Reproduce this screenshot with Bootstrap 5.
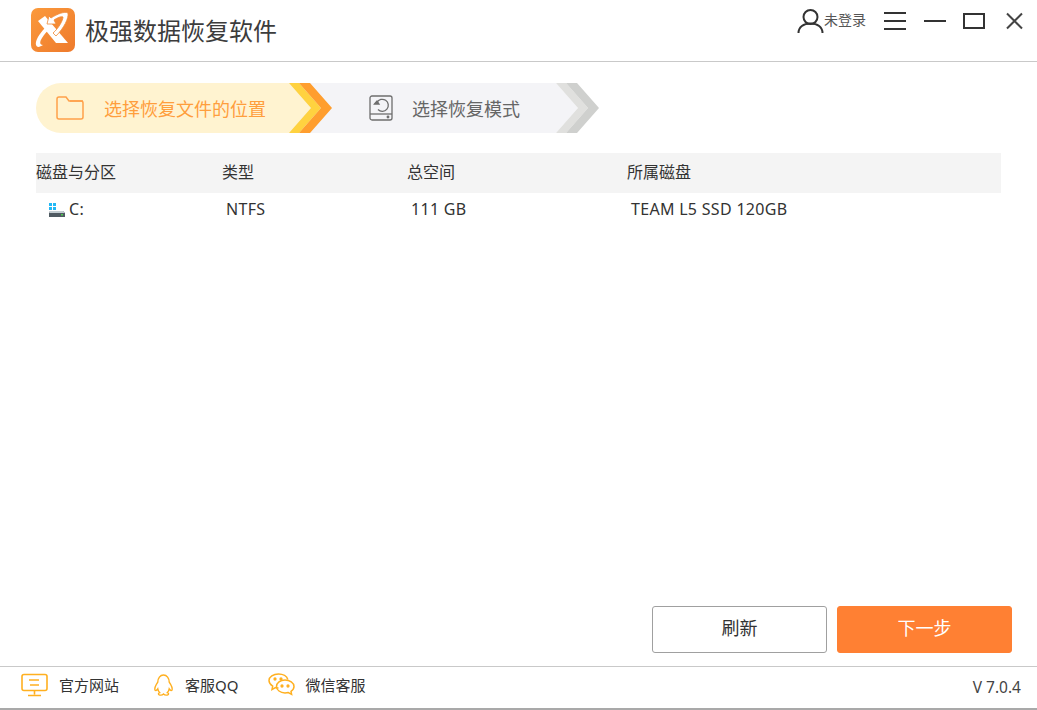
<!DOCTYPE html>
<html lang="zh">
<head>
<meta charset="utf-8">
<title>极强数据恢复软件</title>
<link href="https://cdn.jsdelivr.net/npm/bootstrap@5.3.0/dist/css/bootstrap.min.css" rel="stylesheet">
<style>
html,body{height:100%;overflow:hidden;background:#fff}
body{font-family:"Noto Sans","Noto Sans CJK SC",sans-serif;color:#333;line-height:1.2}
.app-win{width:1037px;height:710px;border-bottom:2px solid #a9a9a9}
.app-top{height:62px;border-bottom:1px solid #c9c9c9;padding-left:31px}
.app-title{font-size:24px;color:#3c3c3c;margin-left:10px;margin-top:3px}
.login-txt{font-size:14px;color:#555;margin-left:0;margin-top:4px}
.win-tools{padding-right:13px;padding-top:8px}
.tool-a{margin-left:17px}
.tool-b{margin-left:17px}
.tool-c{margin-left:19px}
.app-main{padding:21px 36px 0;height:604px}
.step-bar{height:50px;width:563px}
.step-on{width:253px;height:50px;background:#fff3d0;border-radius:25px 0 0 25px;color:#ff9e3d;font-size:18px;padding-left:20px}
.step-off{width:224px;height:50px;background:#f4f4f7;color:#666;font-size:18px;padding-left:37px}
.step-on .step-ico{margin-right:20px}
.step-off .step-ico{margin-right:19px}
.step-on span,.step-off span{padding-top:3px}
.drv-head{height:40px;background:#f4f4f4;margin-top:20px;width:965px;font-size:16px;color:#333}
.drv-row{height:29px;width:965px;font-size:16px;color:#333;letter-spacing:.3px;padding-top:5px}
.c1{width:186px}.c2{width:185px}.c3{width:220px}
.drv-row .c2,.drv-row .c3,.drv-row .c4{padding-left:4px}
.drv-row .c1{padding-left:13px}
.act-row{margin-top:384px;width:976px;gap:10px}
.act-btn{width:175px;height:47px;font-size:18px;border-radius:3px;padding:0 0 2px;font-family:inherit}
.act-ghost{background:#fff;border:1px solid #a0a0a0;color:#333}
.act-main{background:#ff8033;border:1px solid #ff8033;color:#fff}
.app-foot{height:42px;border-top:1px solid #c9c9c9;padding:0 16px 6px 21px;font-size:15px;color:#333}
.foot-a{margin-right:34px}
.foot-b{margin-right:30px}
.foot-a svg,.foot-b svg{margin-right:11px}
.foot-c svg{margin-right:10px}
.ver{font-size:15.5px;color:#444;margin-top:6px}
</style>
</head>
<body>
<div class="app-win d-flex flex-column">
  <header class="app-top d-flex align-items-start justify-content-between">
    <div class="d-flex align-items-center pt-2">
      <svg width="44" height="44" viewBox="0 0 44 44">
        <defs><linearGradient id="lg" x1="0" y1="0" x2="1" y2="1"><stop offset="0" stop-color="#fb9a3c"/><stop offset="1" stop-color="#ee7a2c"/></linearGradient></defs>
        <rect width="44" height="44" rx="7" fill="url(#lg)"/>
        <path d="M7 13L14 8 37 35 25 35z" fill="#fff"/>
        <path d="M14 20C8 26 4 33 5 37 6 40 9 39 12 37 8 37 9 33 11 30 13 27 15 24 17 23z" fill="#fff"/>
        <path d="M37 5C38 10 33 20 25 28L22 25C28 20 32 12 32 9 30 8 26 10 23 12L25 16 16 16 18 8 20 10C26 6 34 3 37 5z" fill="#fff" stroke="#f08a35" stroke-width=".8"/>
      </svg>
      <span class="app-title">极强数据恢复软件</span>
    </div>
    <div class="win-tools d-flex align-items-start">
      <svg width="27" height="26" viewBox="0 0 27 26" fill="none" stroke="#333" stroke-width="2"><circle cx="13.5" cy="9" r="7"/><path d="M1.500 25c0-6 5-9.500 12-9.500s12 3.500 12 9.500"/></svg>
      <span class="login-txt">未登录</span>
      <svg class="tool-a" width="24" height="24" viewBox="0 0 24 24" stroke="#333" stroke-width="2"><path d="M1 5h22M1 13h22M1 21h22"/></svg>
      <svg class="tool-a" width="22" height="24" viewBox="0 0 22 24" stroke="#333" stroke-width="2"><path d="M0 13h22"/></svg>
      <svg class="tool-b" width="23" height="24" viewBox="0 0 23 24" fill="none" stroke="#333" stroke-width="2"><rect x="1" y="6" width="20" height="14"/></svg>
      <svg class="tool-c" width="19" height="24" viewBox="0 0 19 24" stroke="#444" stroke-width="2"><path d="M2 5.500l15 15M17 5.500l-15 15"/></svg>
    </div>
  </header>
  <main class="app-main">
    <div class="step-bar d-flex">
      <div class="step-on d-flex align-items-center">
        <svg class="step-ico" width="28" height="24" viewBox="0 0 28 24" fill="none" stroke="#ffa14a" stroke-width="1.500"><path d="M1 3q0-2 2-2h7l3 4h12q2 0 2 2v14q0 2-2 2H3q-2 0-2-2z"/><path d="M14 5h13"/></svg>
        <span>选择恢复文件的位置</span>
      </div>
      <svg width="43" height="50" viewBox="0 0 43 50"><rect width="43" height="50" fill="#f4f4f7"/><path d="M0 0L22 25 0 50z" fill="#fff3d0"/><path d="M0 0h10l22 25-22 25H0l22-25z" fill="#ffd23f"/><path d="M10 0h11l22 25-22 25H10l22-25z" fill="#ff9e2e"/></svg>
      <div class="step-off d-flex align-items-center">
        <svg class="step-ico" width="24" height="26" viewBox="0 0 24 26" fill="none" stroke="#6e6e6e" stroke-width="1.300"><rect x="1" y="1" width="22" height="24" rx="2"/><path d="M1 19h22"/><path d="M8 7.500a6 6 0 1 1 1 7"/><path d="M5.500 9l2.500-3 2 3z" fill="#6e6e6e"/><circle cx="19" cy="22" r=".8" fill="#6e6e6e"/></svg>
        <span>选择恢复模式</span>
      </div>
      <svg width="43" height="50" viewBox="0 0 43 50"><path d="M0 0L22 25 0 50z" fill="#f4f4f7"/><path d="M0 0h10l22 25-22 25H0l22-25z" fill="#e0e0de"/><path d="M10 0h11l22 25-22 25H10l22-25z" fill="#cfd0ce"/></svg>
    </div>
    <div class="drv-head d-flex align-items-center">
      <div class="c1">磁盘与分区</div><div class="c2">类型</div><div class="c3">总空间</div><div class="c4">所属磁盘</div>
    </div>
    <div class="drv-row d-flex align-items-center">
      <div class="c1 d-flex align-items-center">
        <svg class="me-1" width="16" height="14" viewBox="0 0 16 14"><path d="M0 0h3v3H0zM4 0h3v3H4zM0 4h3v3H0zM4 4h3v3H4z" fill="#22b8f5"/><path d="M1 8h13l2 2v4H0v-4z" fill="#4f5a62"/><path d="M1 8h13l2 2H0z" fill="#c3ccd1"/><rect x="12" y="11" width="2" height="1.500" fill="#4ecb4e"/></svg>
        <span>C:</span>
      </div>
      <div class="c2">NTFS</div><div class="c3">111 GB</div><div class="c4">TEAM L5 SSD 120GB</div>
    </div>
    <div class="act-row d-flex justify-content-end">
      <button type="button" class="btn act-btn act-ghost">刷新</button>
      <button type="button" class="btn act-btn act-main">下一步</button>
    </div>
  </main>
  <footer class="app-foot d-flex align-items-center justify-content-between">
    <div class="d-flex align-items-center">
      <div class="foot-a d-flex align-items-center">
        <svg width="27" height="24" viewBox="0 0 27 24" fill="none" stroke="#ffb020" stroke-width="1.600"><rect x="1" y="1.500" width="25" height="16" rx="2"/><path d="M8 7h10M9 12h9M13.500 18v3.500M7 22.500h13"/></svg>
        <span>官方网站</span>
      </div>
      <div class="foot-b d-flex align-items-center">
        <svg width="21" height="24" viewBox="0 0 22 24" fill="none" stroke="#ffb020" stroke-width="1.500"><path d="M5 9c0-4 2.500-7.500 6-7.500s6 3.500 6 7.500c2 3 3.500 6 3 8-.5 1.500-2 .5-3-1-.3 1.500-1 3-2 4 1.500.5 2 2 0 2.500-1.500.3-3 0-4-1-1 1-2.500 1.300-4 1-2-.5-1.500-2 0-2.500-1-1-1.700-2.500-2-4-1 1.500-2.500 2.500-3 1-.5-2 1-5 3-8z"/></svg>
        <span>客服QQ</span>
      </div>
      <div class="foot-c d-flex align-items-center">
        <svg width="27" height="24" viewBox="0 0 27 24" fill="none" stroke="#ffb020" stroke-width="1.500"><path d="M10.500 15c-1 0-2 0-3-.4L4 16.500l.7-3.300C2.500 11.700 1 9.700 1 7.500 1 3.900 5.300 1 10.500 1c4.500 0 8.500 2.200 9.300 5.500"/><path d="M17 7c4.700 0 9 2.800 9 6.500 0 2-1.200 3.600-3 4.800l.6 3-3.300-1.800c-1 .3-2 .4-3.300.4-4.700 0-8.500-2.900-8.500-6.400S12.300 7 17 7z"/><circle cx="7" cy="6" r=".9" fill="#ffb020"/><circle cx="13" cy="6" r=".9" fill="#ffb020"/><circle cx="14" cy="13" r=".9" fill="#ffb020"/><circle cx="20" cy="13" r=".9" fill="#ffb020"/></svg>
        <span>微信客服</span>
      </div>
    </div>
    <span class="ver">V 7.0.4</span>
  </footer>
</div>
<script src="https://cdn.jsdelivr.net/npm/bootstrap@5.3.0/dist/js/bootstrap.bundle.min.js"></script>
</body>
</html>
